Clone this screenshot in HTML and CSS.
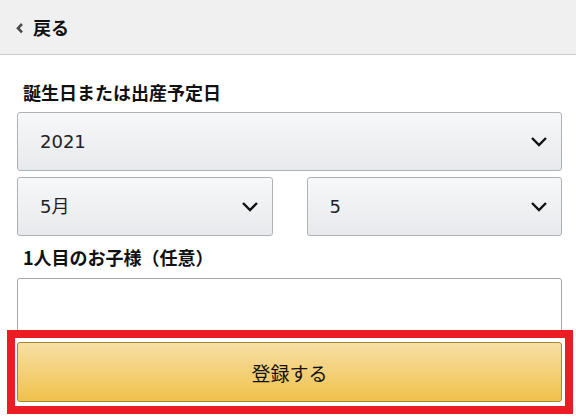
FILE: index.html
```html
<!DOCTYPE html>
<html lang="ja">
<head>
<meta charset="utf-8">
<link rel="stylesheet" href="styles.css">
</head>
<body>
<header class="topbar">
  <svg class="back-icon" width="9" height="12" viewBox="0 0 9 12"><path d="M7 2 L3 6.2 L7 10.4" fill="none" stroke="#4a4a4a" stroke-width="2.6"/></svg>
  <span class="back-text">戻る</span>
</header>
<main class="form">
  <div class="label label-first">誕生日または出産予定日</div>
  <div class="select full">
    <span class="value">2021</span>
    <svg class="chev" width="18" height="11" viewBox="0 0 18 11"><path d="M2 2 L9 9 L16 2" fill="none" stroke="#111" stroke-width="2.4"/></svg>
  </div>
  <div class="row">
    <div class="select">
      <span class="value">5月</span>
      <svg class="chev" width="18" height="11" viewBox="0 0 18 11"><path d="M2 2 L9 9 L16 2" fill="none" stroke="#111" stroke-width="2.4"/></svg>
    </div>
    <div class="select">
      <span class="value">5</span>
      <svg class="chev" width="18" height="11" viewBox="0 0 18 11"><path d="M2 2 L9 9 L16 2" fill="none" stroke="#111" stroke-width="2.4"/></svg>
    </div>
  </div>
  <div class="label">1人目のお子様（任意）</div>
  <div class="textinput"></div>
  <div class="submit-wrap">
    <button class="submit">登録する</button>
    <div class="highlight"></div>
  </div>
</main>
</body>
</html>
```
FILE: styles.css
```css
html, body {
  margin: 0;
  padding: 0;
  background: #fff;
}
body {
  font-family: "DejaVu Sans", "Noto Sans CJK JP", sans-serif;
  color: #111;
  width: 576px;
  height: 420px;
  overflow: hidden;
  position: relative;
}
.topbar {
  height: 55px;
  background: #f0f0f0;
  border-bottom: 1px solid #c9c9c9;
  display: flex;
  align-items: center;
  padding-left: 15px;
  box-sizing: border-box;
}
.back-icon {
  margin-right: 9px;
  margin-top: 2px;
}
.back-text {
  font-family: "Noto Sans CJK JP", sans-serif;
  font-weight: 700;
  font-size: 18px;
  line-height: 22px;
}
.form {
  padding: 0 14px 0 17px;
}
.label {
  font-family: "Noto Sans CJK JP", sans-serif;
  font-weight: 700;
  font-size: 18px;
  line-height: 22px;
  padding-left: 6px;
  margin-top: 10px;
  margin-bottom: 10px;
}
.label-first {
  margin-top: 26px;
  margin-bottom: 9px;
}
.select {
  height: 59px;
  box-sizing: border-box;
  border: 1px solid #adb1b8;
  border-radius: 3px;
  background: linear-gradient(#f7f8fa, #e7e9ec);
  display: flex;
  align-items: center;
  justify-content: space-between;
  padding: 0 13px 0 22px;
}
.value {
  font-size: 18px;
  line-height: 22px;
  color: #222;
}
.chev {
  display: block;
}
.row {
  display: grid;
  grid-template-columns: 1fr 1fr;
  column-gap: 34px;
  margin-top: 6px;
}
.textinput {
  height: 58px;
  box-sizing: border-box;
  border: 1px solid #a6a6a6;
  border-radius: 3px;
  background: #fff;
}
.submit-wrap {
  position: relative;
  margin-top: 6px;
}
.submit {
  display: block;
  width: 100%;
  height: 60px;
  box-sizing: border-box;
  border: 1px solid #a88734;
  border-radius: 3px;
  background: linear-gradient(#f7dfa5, #f0c14b);
  font-family: "Noto Sans CJK JP", sans-serif;
  font-size: 19px;
  color: #111;
  padding: 0;
}
.highlight {
  position: absolute;
  left: -10px;
  top: -12px;
  width: 566px;
  height: 84px;
  box-sizing: border-box;
  border: 8px solid #ec1c24;
  pointer-events: none;
}
```
